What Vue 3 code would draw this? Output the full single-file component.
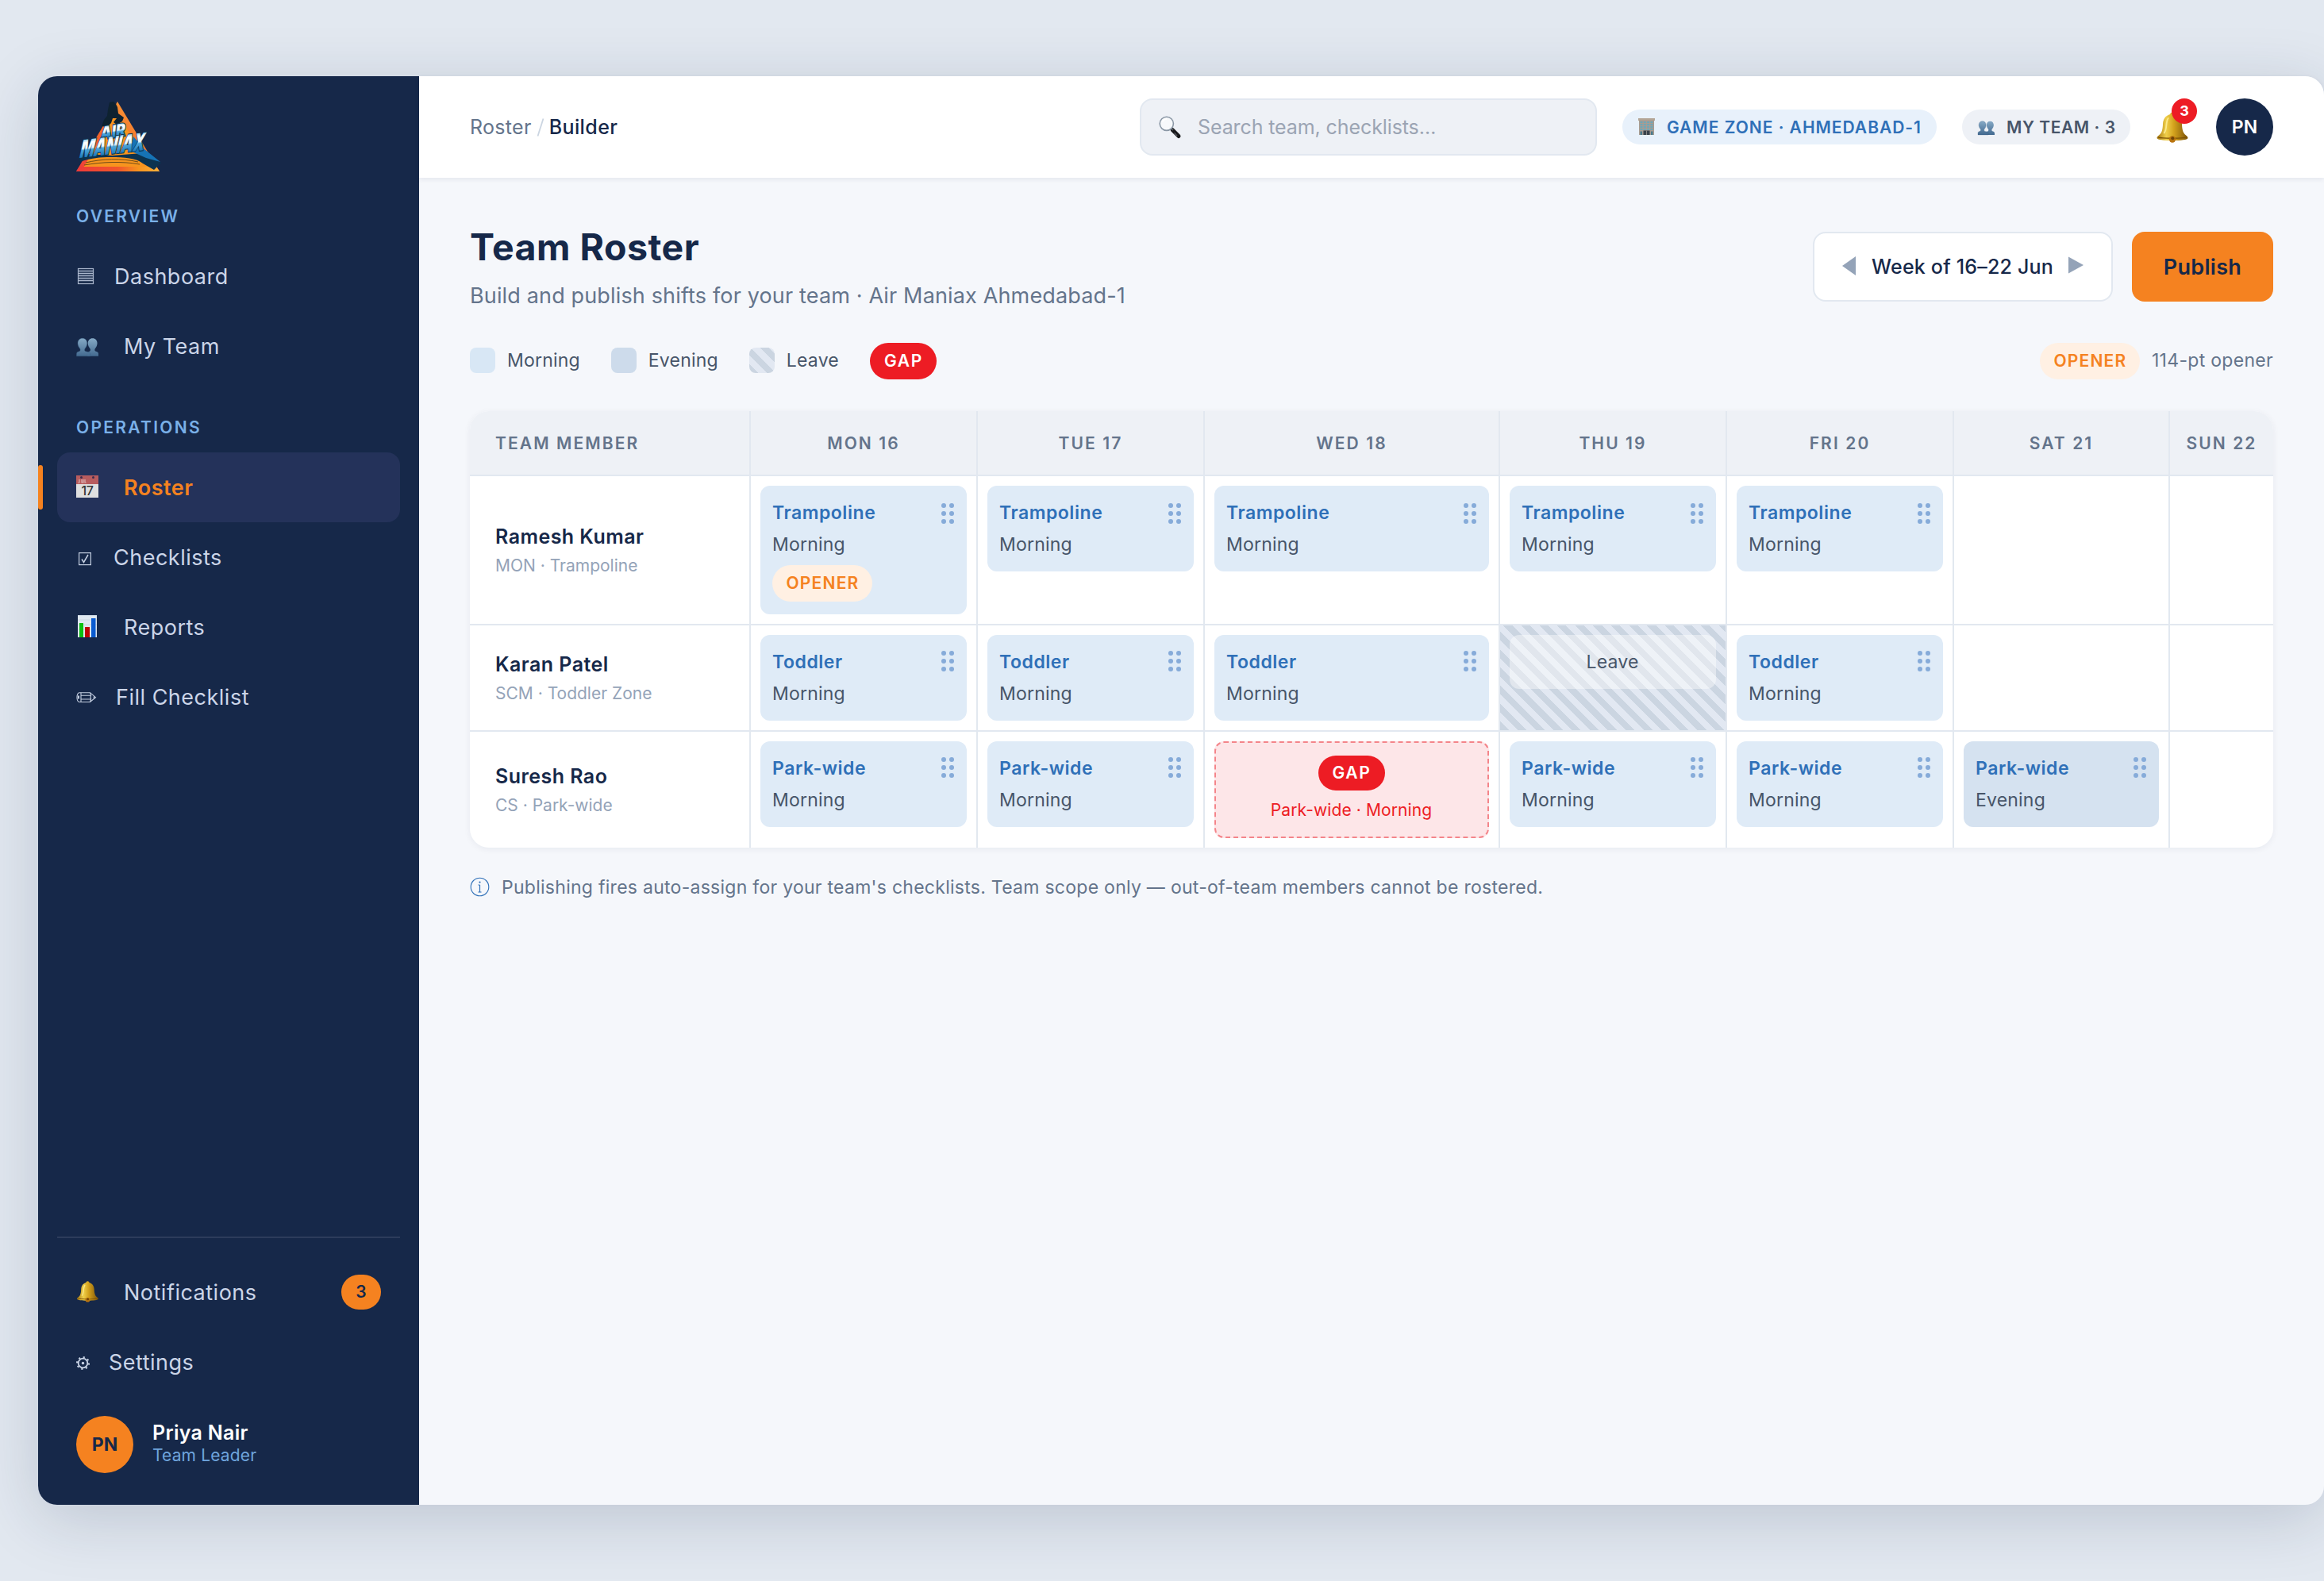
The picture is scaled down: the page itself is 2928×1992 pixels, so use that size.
<script setup>
import { ref, computed } from "vue";

const overview = [
  { id: "dashboard", label: "Dashboard", iconWidth: 24 },
  { id: "team", label: "My Team", iconWidth: 36 }
];

const operations = [
  { id: "calendar", label: "Roster", iconWidth: 36 },
  { id: "check", label: "Checklists", iconWidth: 23 },
  { id: "chart", label: "Reports", iconWidth: 36 },
  { id: "pencil", label: "Fill Checklist", iconWidth: 26 }
];

const account = [
  { id: "bell", label: "Notifications", iconWidth: 36, badge: 3 },
  { id: "gear", label: "Settings", iconWidth: 17 }
];

const groups = [
  { title: "Overview", items: overview },
  { title: "Operations", items: operations }
];

const active = ref("calendar");
const search = ref("");

const days = ["Mon 16", "Tue 17", "Wed 18", "Thu 19", "Fri 20", "Sat 21", "Sun 22"];

function morning(zone, opener = false) {
  return { type: "shift", zone, shift: "Morning", opener };
}

const members = ref([
  {
    name: "Ramesh Kumar",
    role: "MON · Trampoline",
    cells: [
      morning("Trampoline", true),
      morning("Trampoline"),
      morning("Trampoline"),
      morning("Trampoline"),
      morning("Trampoline"),
      null,
      null
    ]
  },
  {
    name: "Karan Patel",
    role: "SCM · Toddler Zone",
    cells: [
      morning("Toddler"),
      morning("Toddler"),
      morning("Toddler"),
      { type: "leave" },
      morning("Toddler"),
      null,
      null
    ]
  },
  {
    name: "Suresh Rao",
    role: "CS · Park-wide",
    cells: [
      morning("Park-wide"),
      morning("Park-wide"),
      { type: "gap", text: "Park-wide · Morning" },
      morning("Park-wide"),
      morning("Park-wide"),
      { type: "shift", zone: "Park-wide", shift: "Evening" },
      null
    ]
  }
]);

const weekStart = ref(16);
const weekLabel = computed(() => `Week of ${weekStart.value}–${weekStart.value + 6} Jun`);
</script>

<template>
  <!-- shared icons -->
  <svg class="defs" width="0" height="0">
    <defs>
      <linearGradient id="gold" x1="0" x2="1" y1="0" y2="0">
        <stop offset="0" stop-color="#a87a12" />
        <stop offset="0.3" stop-color="#f0cf4a" />
        <stop offset="0.55" stop-color="#d3a11c" />
        <stop offset="1" stop-color="#7c5308" />
      </linearGradient>
      <linearGradient id="bust" x1="0" x2="0" y1="0" y2="1">
        <stop offset="0" stop-color="#86aac6" />
        <stop offset="1" stop-color="#436a90" />
      </linearGradient>
      <linearGradient id="tri" x1="0" x2="1" y1="1" y2="0">
        <stop offset="0" stop-color="#ee3a3a" />
        <stop offset="0.45" stop-color="#f26a2a" />
        <stop offset="1" stop-color="#fdb13c" />
      </linearGradient>
      <linearGradient id="triBase" x1="0" x2="1" y1="0" y2="0">
        <stop offset="0" stop-color="#ee3a3a" />
        <stop offset="0.5" stop-color="#f1562b" />
        <stop offset="0.75" stop-color="#f7941e" />
        <stop offset="1" stop-color="#fdb13c" />
      </linearGradient>
      <linearGradient id="ice" x1="0" x2="0" y1="0" y2="1">
        <stop offset="0.15" stop-color="#5fb4e4" />
        <stop offset="0.3" stop-color="#ffffff" />
        <stop offset="0.5" stop-color="#e4f4fc" />
        <stop offset="0.56" stop-color="#4ea6da" />
        <stop offset="0.85" stop-color="#1673b5" />
      </linearGradient>
      <symbol id="i-bell" viewBox="0 0 28 27" overflow="visible">
        <path fill="url(#gold)" d="M14 0.3c1.2 0 2 .8 2 1.8 3.9 1 6.2 4.2 6.4 8.6.2 5.300 1.100 8 3.400 9.900 1.600 1.300 2 1.900 1.800 2.700-.3 1.200-6 2-13.600 2S.7 24.500.4 23.300c-.2-.8.2-1.400 1.800-2.700 2.300-1.900 3.200-4.600 3.400-9.900C5.800 6.300 8.100 3.100 12 2.100c0-1 .8-1.800 2-1.800z" />
        <path fill="none" stroke="#7c5206" stroke-width="0.9" d="M1.200 22.300c3.600 1.300 21.800 1.300 25.600 0" />
        <path fill="none" stroke="#fbe98a" stroke-width="1.3" stroke-linecap="round" d="M10.300 5.600c-1.500 2-1.500 5-1.900 8.300-.3 2.200-.9 3.600-1.600 4.700" />
        <circle cx="14" cy="24.2" r="2.9" fill="#b9740f" />
        <circle cx="14.2" cy="23.4" r="1.4" fill="#6f4307" />
      </symbol>
      <symbol id="i-team" viewBox="0 0 28 23" overflow="visible">
        <g fill="url(#bust)">
          <path d="M20.500 0c3.600 0 6 2.700 6 6.500 0 3-1.500 5.200-2.900 7.100-.6.900-.4 2.700.5 3.100 1.700.7 3.900.9 3.900 3.300v3H14v-3c0-2.400 1.600-2.700 2.900-3.300.9-.4 1.100-2.200.5-3.100-1.400-1.900-2.900-4.100-2.900-7.100 0-3.800 2.400-6.500 6-6.500z" />
          <path stroke="#395f83" stroke-width="0.4" d="M7.500 0c3.600 0 6 2.700 6 6.500 0 3-1.500 5.200-2.900 7.100-.6.900-.4 2.700.5 3.100 1.700.7 6.400 1.100 6.400 3.500V23H0v-3c0-2.400 2.200-2.600 3.900-3.300.9-.4 1.100-2.200.5-3.100C3 11.700 1.500 9.500 1.500 6.500 1.500 2.700 3.900 0 7.500 0z" />
        </g>
      </symbol>
    </defs>
  </svg>

  <div class="page">
    <div class="window">
      <aside class="sidebar">
        <svg class="logo" width="108" height="88" viewBox="0 0 108 88">
          <polygon points="52,0 105,88 0,88" fill="url(#tri)" />
          <polygon points="51,13 94,83 9,83" fill="#f7941e" />
          <polygon points="0,88 4,82 101,82 105,88" fill="url(#triBase)" />
          <!-- jumping figure -->
          <path fill="#0e2230" d="M42 1l5-1 3 3 2 4 1 8 7 5-2 5-7 4-4-3 4-5-5 0-2 6-5 5-7-1 3-8 4-5 1-8z" />
          <path fill="#0b3350" d="M3 70l12-4 30 2 38-3 24 12-9 9-14-8c-8-7-24-8-40-8-14 0-26 1-39 6z" />
          <g fill="none" stroke="#5f4317" stroke-width="0.9">
            <path d="M12 77c20-5 45-6 66-1" />
            <path d="M10 80c22-4 48-5 70-1" />
          </g>
          <polygon points="72,44 86,60 106,76 88,71 68,62" fill="#1673b5" />
          <g class="logo-text">
            <text x="31" y="48" font-size="22" textLength="32" lengthAdjust="spacingAndGlyphs" transform="rotate(-9 31 48) skewX(-14) translate(11 0)">AIR</text>
            <text x="4" y="71" font-size="30" textLength="82" lengthAdjust="spacingAndGlyphs" transform="rotate(-7 4 71) skewX(-20) translate(25 0)">MANIAX</text>
          </g>
        </svg>

        <nav>
          <div v-for="g in groups" :key="g.title" class="nav-group">
            <div class="nav-label">{{ g.title }}</div>
            <a
              v-for="item in g.items"
              :key="item.id"
              class="nav-item"
              :class="{ active: active === item.id }"
              @click="active = item.id"
            >
              <svg :width="item.iconWidth" height="28" :viewBox="`0 0 ${item.iconWidth} 28`">
                <g v-if="item.id === 'dashboard'" fill="none" stroke="#aab6cc">
                  <rect x="2.5" y="4.5" width="19" height="19" stroke-width="1.2" />
                  <path stroke-width="1.5" d="M2.500 7.500h19M2.500 10.500h19M2.500 13.500h19M2.500 16.500h19M2.500 19.500h19" />
                </g>
                <use v-else-if="item.id === 'team'" href="#i-team" x="0.5" y="4" width="27.5" height="23" />
                <g v-else-if="item.id === 'calendar'">
                  <rect x="0" y="-1" width="28" height="28" fill="#dfdfdf" />
                  <rect x="0" y="-1" width="28" height="11" fill="#b85c5e" />
                  <circle cx="6.5" cy="1.5" r="1.5" fill="#3d2c4e" />
                  <circle cx="21.5" cy="1.5" r="1.5" fill="#3d2c4e" />
                  <path d="M4 4v3.500q0 1-1.500 1M7 4v4h2v-4M11 4v4h1.500" fill="none" stroke="#dcb3b4" stroke-width="1.2" />
                  <text x="14" y="24" class="cal-day">17</text>
                </g>
                <g v-else-if="item.id === 'check'" fill="none" stroke="#c3cee0" stroke-width="1.2">
                  <rect x="3.6" y="8.6" width="14.8" height="15" />
                  <path d="M7 16.500l2.500 4 5.500-9.500" stroke-width="1.5" />
                </g>
                <g v-else-if="item.id === 'chart'">
                  <rect x="2" y="-1" width="24" height="28" fill="#dfe8f0" />
                  <path d="M2 -0.500h24M2 5h24M2 11h24M2 17h24" stroke="#c5d2de" stroke-width="0.7" />
                  <rect x="4" y="9" width="5" height="18" fill="#0cc011" />
                  <rect x="11" y="14" width="6" height="13" fill="#c00404" />
                  <rect x="19" y="3" width="5.5" height="24" fill="#0a5bd0" />
                </g>
                <g v-else-if="item.id === 'pencil'" fill="none" stroke="#c3cee0" stroke-width="1.1">
                  <path d="M4 8.700h13.500l7 6-7 5.800H4c-4 0-4-11.800 0-11.800z" />
                  <path d="M6 8.700v11.800M6 12.200h12M6 17h12M17.500 8.700q2 3 .5 5.900 1.500 2.900-.5 5.900" />
                  <path d="M3 12.500v4" stroke-width="2" />
                  <path d="M22.500 13.400v2.600" stroke-width="1.5" />
                </g>
              </svg>
              <span>{{ item.label }}</span>
            </a>
          </div>
        </nav>

        <div class="sidebar-foot">
          <a v-for="item in account" :key="item.id" class="nav-item">
            <svg :width="item.iconWidth" height="28" :viewBox="`0 0 ${item.iconWidth} 28`">
              <use v-if="item.id === 'bell'" href="#i-bell" x="0.7" y="0" width="27.5" height="26.5" />
              <g v-else fill="none" stroke="#c9d4e6">
                <circle cx="8.5" cy="15.5" r="5.8" stroke-width="1.8" />
                <circle cx="8.5" cy="15.5" r="7.5" stroke-width="2" stroke-dasharray="2.2 3.69" />
                <circle cx="8.5" cy="15.5" r="1.7" fill="#c9d4e6" stroke="none" />
              </g>
            </svg>
            <span>{{ item.label }}</span>
            <span v-if="item.badge" class="nav-badge">{{ item.badge }}</span>
          </a>
          <div class="profile">
            <div class="avatar orange">PN</div>
            <div>
              <div class="profile-name">Priya Nair</div>
              <div class="profile-role">Team Leader</div>
            </div>
          </div>
        </div>
      </aside>

      <main class="main">
        <header class="topbar">
          <div class="crumbs">
            <span>Roster</span>
            <svg width="10" height="26" viewBox="0 0 10 26"><path d="M1.500 24.500L8.500 2.500" stroke="#cbd5e1" stroke-width="1.8" /></svg>
            <strong>Builder</strong>
          </div>

          <label class="search">
            <svg width="28" height="28" viewBox="0 0 28 28">
              <path d="M17 17.500l8 8" stroke="#17181a" stroke-width="5" stroke-linecap="round" />
              <path d="M14.500 14.500l3.500 3.500" stroke="#55595e" stroke-width="2" />
              <circle cx="9.8" cy="9.8" r="8.6" fill="#f7f9fb" stroke="#8a97a5" stroke-width="1.6" />
              <path d="M4.500 7.500c1-2.200 3-3.500 5.500-3.500" fill="none" stroke="#fff" stroke-width="1.6" />
              <path d="M19.500 21.500l3.500 3.500" stroke="#55595e" stroke-width="1.2" />
            </svg>
            <input v-model="search" type="text" placeholder="Search team, checklists…" />
          </label>

          <span class="pill zone">
            <svg width="21" height="22" viewBox="0 0 21 22">
              <rect x="0" y="0" width="21" height="3" fill="#b3a596" />
              <rect x="1" y="2.5" width="19" height="18.5" fill="#a89c92" />
              <g fill="#6fa7b8">
                <rect v-for="n in 16" :key="n" :x="2.5 + ((n - 1) % 4) * 4.3" :y="4 + Math.floor((n - 1) / 4) * 3" width="3" height="2" />
              </g>
              <rect x="6.5" y="15.5" width="8" height="5.5" fill="#39424c" />
              <rect x="10" y="15.5" width="1" height="5.5" fill="#8b8a88" />
              <rect x="2.5" y="16.5" width="2.5" height="4.5" fill="#4a7c8e" />
              <rect x="16" y="16.5" width="2.5" height="4.5" fill="#4a7c8e" />
            </svg>
            Game Zone · Ahmedabad-1
          </span>
          <span class="pill mine">
            <svg width="21" height="22" viewBox="0 0 21 22"><use href="#i-team" x="0" y="3.5" width="21" height="17.5" /></svg>
            My Team · 3
          </span>

          <button class="bell">
            <svg width="40" height="40" viewBox="0 0 40 40"><use href="#i-bell" x="0" y="0" width="40" height="38.5" /></svg>
            <span class="bell-count">3</span>
          </button>
          <div class="avatar navy">PN</div>
        </header>

        <section class="content">
          <div class="page-head">
            <div>
              <h1>Team Roster</h1>
              <p>Build and publish shifts for your team · Air Maniax Ahmedabad-1</p>
            </div>
            <div class="actions">
              <div class="week">
                <svg width="18" height="26" viewBox="0 0 18 26" @click="weekStart -= 7"><polygon points="0,12 17,0 17,24" /></svg>
                <span>{{ weekLabel }}</span>
                <svg width="20" height="26" viewBox="0 0 20 26" @click="weekStart += 7"><polygon points="0,0.5 19,11 0,21.5" /></svg>
              </div>
              <button class="publish">Publish</button>
            </div>
          </div>

          <div class="legend">
            <div class="legend-item"><i class="chip morning"></i>Morning</div>
            <div class="legend-item"><i class="chip evening"></i>Evening</div>
            <div class="legend-item"><i class="chip stripes"></i>Leave</div>
            <span class="tag gap-tag">GAP</span>
            <span class="tag opener-tag push">OPENER</span>
            <span class="legend-note">114-pt opener</span>
          </div>

          <div class="table">
            <div class="row head">
              <div class="cell member">Team Member</div>
              <div v-for="d in days" :key="d" class="cell">{{ d }}</div>
            </div>
            <div v-for="m in members" :key="m.name" class="row body">
              <div class="cell member">
                <div class="name">{{ m.name }}</div>
                <div class="role">{{ m.role }}</div>
              </div>
              <div
                v-for="(c, i) in m.cells"
                :key="i"
                class="cell"
                :class="{ stripes: c && c.type === 'leave' }"
              >
                <div v-if="c && c.type === 'shift'" class="card" :class="c.shift.toLowerCase()">
                  <div class="card-top">
                    <span class="zone-name">{{ c.zone }}</span>
                    <span class="grip"><i v-for="n in 6" :key="n"></i></span>
                  </div>
                  <div class="shift">{{ c.shift }}</div>
                  <span v-if="c.opener" class="tag opener-tag">OPENER</span>
                </div>
                <div v-else-if="c && c.type === 'leave'" class="card leave">Leave</div>
                <div v-else-if="c && c.type === 'gap'" class="card gap">
                  <span class="tag gap-tag">GAP</span>
                  <div class="gap-text">{{ c.text }}</div>
                </div>
              </div>
            </div>
          </div>

          <div class="note">
            <svg width="25" height="26" viewBox="0 0 25 26">
              <circle cx="12.5" cy="12.5" r="11.3" fill="none" stroke="#2f70b8" stroke-width="1.1" />
              <path d="M12.500 10v9M10.500 19h4M10.500 10h2" stroke="#2f70b8" stroke-width="1.2" fill="none" />
              <circle cx="12.5" cy="6.6" r="1.1" fill="#2f70b8" />
            </svg>
            <span>Publishing fires auto-assign for your team's checklists. Team scope only — out-of-team members cannot be rostered.</span>
          </div>
        </section>
      </main>
    </div>
  </div>
</template>

<style>
body {
  background: #e2e8f0;
}
</style>

<style scoped>
* {
  box-sizing: border-box;
}

.defs {
  position: absolute;
}

svg {
  display: block;
  flex: none;
  overflow: visible;
}

.page {
  width: 2928px;
  height: 1992px;
  padding: 96px 0 96px 48px;
  background: #e2e8f0;
  font-family: Inter, "Liberation Sans", sans-serif;
  overflow: hidden;
}

.window {
  display: flex;
  width: 2880px;
  height: 1800px;
  border-radius: 24px;
  box-shadow: 0 16px 80px rgba(22, 40, 73, 0.18);
}

/* sidebar */
.sidebar {
  display: flex;
  flex-direction: column;
  width: 480px;
  flex: none;
  padding: 32px 24px 40px;
  background: #162849;
  border-radius: 24px 0 0 24px;
}

.logo {
  margin-left: 24px;
}

.logo-text {
  font-family: Inter, sans-serif;
  font-weight: 900;
  fill: url(#ice);
  stroke: #0b3350;
  stroke-width: 2px;
  paint-order: stroke;
}

.nav-group {
  margin-top: 40px;
}

.nav-group:first-child {
  margin-top: 38px;
}

.nav-label {
  height: 50px;
  padding: 0 24px;
  line-height: 38px;
  font-size: 21px;
  font-weight: 600;
  letter-spacing: 2.3px;
  text-transform: uppercase;
  color: #7ab0e8;
}

.nav-item {
  position: relative;
  display: flex;
  align-items: center;
  gap: 24px;
  height: 88px;
  padding: 0 24px;
  border-radius: 16px;
  font-size: 27px;
  letter-spacing: 0.5px;
  color: #cbd5e8;
  cursor: pointer;
}

.nav-item.active {
  background: #24325a;
  color: #f58220;
  font-weight: 600;
}

.nav-item.active::before {
  content: "";
  position: absolute;
  left: -24px;
  top: 16px;
  width: 6px;
  height: 56px;
  border-radius: 3px;
  background: #f58220;
}

.cal-day {
  font-size: 16px;
  font-weight: 500;
  letter-spacing: -0.5px;
  text-anchor: middle;
  fill: #333;
}

.nav-badge {
  width: 50px;
  margin-left: auto;
  border-radius: 22px;
  background: #f58220;
  color: #162849;
  font-size: 21px;
  font-weight: 600;
  line-height: 44px;
  text-align: center;
  letter-spacing: 0;
}

.sidebar-foot {
  margin-top: auto;
  padding-top: 24px;
  border-top: 2px solid #2d3c5b;
}

.profile {
  display: flex;
  align-items: center;
  gap: 24px;
  padding: 24px 24px 0;
}

.profile-name {
  margin-top: -2px;
  font-size: 25px;
  font-weight: 600;
  line-height: 30px;
  letter-spacing: 0.3px;
  color: #fff;
}

.profile-role {
  font-size: 21px;
  line-height: 28px;
  letter-spacing: 0.15px;
  color: #6fa5de;
}

.avatar {
  width: 72px;
  height: 72px;
  flex: none;
  border-radius: 50%;
  font-size: 23px;
  font-weight: 700;
  line-height: 72px;
  text-align: center;
}

.avatar.orange {
  background: #f58220;
  color: #162849;
}

.avatar.navy {
  background: #162849;
  color: #fff;
  font-weight: 600;
}

/* top bar */
.main {
  flex: 1;
  min-width: 0;
  background: #f5f7fb;
  border-radius: 0 24px 24px 0;
}

.topbar {
  display: flex;
  align-items: center;
  gap: 32px;
  height: 128px;
  padding: 0 64px;
  background: #fff;
  border-radius: 0 24px 0 0;
  box-shadow: 0 2px 6px rgba(22, 40, 73, 0.08);
}

.crumbs {
  display: flex;
  align-items: center;
  gap: 6px;
  margin-right: auto;
  padding-bottom: 1px;
  font-size: 25px;
  letter-spacing: 0.3px;
  color: #64748b;
}

.crumbs strong {
  font-weight: 500;
  letter-spacing: 0.4px;
  color: #162849;
}

.search {
  display: flex;
  align-items: center;
  gap: 21px;
  width: 576px;
  height: 72px;
  padding: 0 22px;
  border: 2px solid #e2e8f0;
  border-radius: 16px;
  background: #eef1f6;
}

.search input {
  flex: 1;
  padding: 0;
  border: none;
  outline: none;
  background: none;
  font: inherit;
  font-size: 25px;
  letter-spacing: -0.1px;
}

.search input::placeholder {
  color: #9ba4b3;
}

.pill {
  display: flex;
  align-items: center;
  gap: 15px;
  height: 44px;
  padding-left: 20px;
  border-radius: 22px;
  font-size: 21px;
  font-weight: 600;
  text-transform: uppercase;
  white-space: nowrap;
}

.pill.zone {
  width: 396px;
  background: #e8f1fb;
  color: #2f70b8;
  letter-spacing: 0.98px;
}

.pill.mine {
  width: 212px;
  background: #eef1f6;
  color: #475569;
  letter-spacing: 0.55px;
}

.bell {
  position: relative;
  width: 44px;
  height: 44px;
  padding: 2px 0 0 1px;
  border: none;
  background: none;
}

.bell-count {
  position: absolute;
  top: -14px;
  right: -8px;
  width: 32px;
  height: 32px;
  border-radius: 50%;
  background: #ed1c24;
  color: #fff;
  font-family: Inter, sans-serif;
  font-size: 18px;
  font-weight: 700;
  line-height: 32px;
  text-align: center;
}

/* page */
.content {
  padding: 64px;
}

.page-head {
  display: flex;
  justify-content: space-between;
  align-items: flex-start;
}

h1 {
  margin: 0;
  font-size: 46.5px;
  font-weight: 700;
  line-height: 46px;
  letter-spacing: 0.5px;
  color: #162849;
}

.page-head p {
  margin: 24px 0 0;
  font-size: 27px;
  line-height: 29px;
  letter-spacing: 0.15px;
  color: #64748b;
}

.actions {
  display: flex;
  gap: 24px;
  padding-top: 4px;
}

.week {
  display: flex;
  align-items: center;
  gap: 19px;
  width: 378px;
  height: 88px;
  padding-left: 35px;
  border: 2px solid #e2e8f0;
  border-radius: 16px;
  background: #fff;
  font-size: 25px;
  font-weight: 500;
  letter-spacing: 0.2px;
  white-space: nowrap;
  color: #162849;
}

.week svg {
  fill: #94a3b8;
  cursor: pointer;
}

.week span {
  padding-bottom: 1px;
}

.publish {
  width: 178px;
  height: 88px;
  padding: 0;
  border: none;
  border-radius: 16px;
  background: #f58220;
  color: #162849;
  font-family: Inter, sans-serif;
  font-size: 27px;
  font-weight: 600;
  letter-spacing: 0.3px;
}

.legend {
  display: flex;
  align-items: center;
  gap: 39px;
  height: 46px;
  margin-top: 45px;
  font-size: 23px;
  letter-spacing: 0.2px;
  color: #475569;
}

.legend-item {
  display: flex;
  align-items: center;
  gap: 15px;
  padding-bottom: 2px;
}

.chip {
  width: 32px;
  height: 32px;
  border-radius: 8px;
}

.chip.morning {
  background: #d8e7f5;
}

.chip.evening {
  background: #cddbeb;
}

.tag {
  display: inline-block;
  height: 46px;
  border-radius: 23px;
  font-size: 21px;
  line-height: 45px;
  text-align: center;
}

.gap-tag {
  width: 84px;
  background: #ed1c24;
  color: #fff;
  font-weight: 600;
  letter-spacing: 1.6px;
  text-indent: 1px;
}

.opener-tag {
  width: 126px;
  background: #fff0e3;
  color: #f58220;
  font-weight: 600;
  letter-spacing: 1.2px;
  text-indent: 1px;
}

.push {
  margin-left: auto;
}

.legend-note {
  margin-left: -24px;
  padding-bottom: 2px;
  letter-spacing: 0.3px;
  color: #64748b;
}

.stripes {
  background: repeating-linear-gradient(45deg, #cbd5e1 0 8px, #e2e8f2 8px 16px);
}

/* roster */
.table {
  margin-top: 40px;
  border-radius: 24px;
  background: #fff;
  box-shadow: 0 2px 8px rgba(22, 40, 73, 0.06);
  overflow: hidden;
}

.row {
  display: grid;
  grid-template-columns: 354px 286px 286px 372px 286px 286px 272px 130px;
}

.cell {
  padding: 12px;
  border-right: 2px solid #e2e8f0;
  border-bottom: 2px solid #e2e8f0;
}

.cell:last-child {
  border-right: none;
}

.row:last-child .cell {
  border-bottom: none;
}

.head {
  background: #eef1f6;
}

.head .cell {
  padding: 0;
  height: 82px;
  font-size: 21px;
  font-weight: 600;
  line-height: 81px;
  letter-spacing: 2.1px;
  text-align: center;
  text-transform: uppercase;
  white-space: nowrap;
  color: #64748b;
}

.head .cell.member {
  padding-left: 32px;
  text-align: left;
}

.body .member {
  display: flex;
  flex-direction: column;
  justify-content: center;
  padding: 1px 32px 0;
}

.name {
  font-size: 25px;
  font-weight: 600;
  line-height: 38px;
  letter-spacing: 0.45px;
  color: #162849;
}

.role {
  font-size: 21px;
  line-height: 36px;
  color: #94a3b8;
}

.card {
  padding: 16px 16px 16px 15px;
  border-radius: 12px;
  font-size: 23px;
  line-height: 36px;
}

.card.morning {
  background: #dfebf7;
}

.card.evening {
  background: #d5e2f0;
}

.card-top {
  display: flex;
  justify-content: space-between;
}

.zone-name {
  font-weight: 600;
  letter-spacing: 0.55px;
  color: #2f70b8;
}

.grip {
  display: grid;
  grid-template-columns: 6px 6px;
  gap: 4px;
  height: 26px;
  margin-top: 4px;
}

.grip i {
  width: 6px;
  height: 6px;
  border-radius: 50%;
  background: #86abd9;
}

.head + .body .grip {
  margin-top: 6px;
}

.shift {
  margin-top: 4px;
  letter-spacing: 0.2px;
  color: #475569;
}

.card .opener-tag {
  display: block;
  margin-top: 8px;
}

.card.leave {
  background: rgba(255, 255, 255, 0.42);
  color: #475569;
  letter-spacing: 0.2px;
  text-align: center;
}

.card.gap {
  border: 2px dashed #f4858a;
  background: #fde6e8;
  text-align: center;
}

.card .gap-tag {
  display: block;
  height: 44px;
  margin: 0 auto;
  line-height: 44px;
}

.gap-text {
  margin-top: 8px;
  font-size: 21px;
  line-height: 34px;
  letter-spacing: 0.1px;
  color: #ed1c24;
}

.note {
  display: flex;
  align-items: center;
  gap: 15px;
  height: 36px;
  margin-top: 32px;
  font-size: 23px;
  letter-spacing: 0.27px;
  white-space: nowrap;
  color: #64748b;
}
</style>
